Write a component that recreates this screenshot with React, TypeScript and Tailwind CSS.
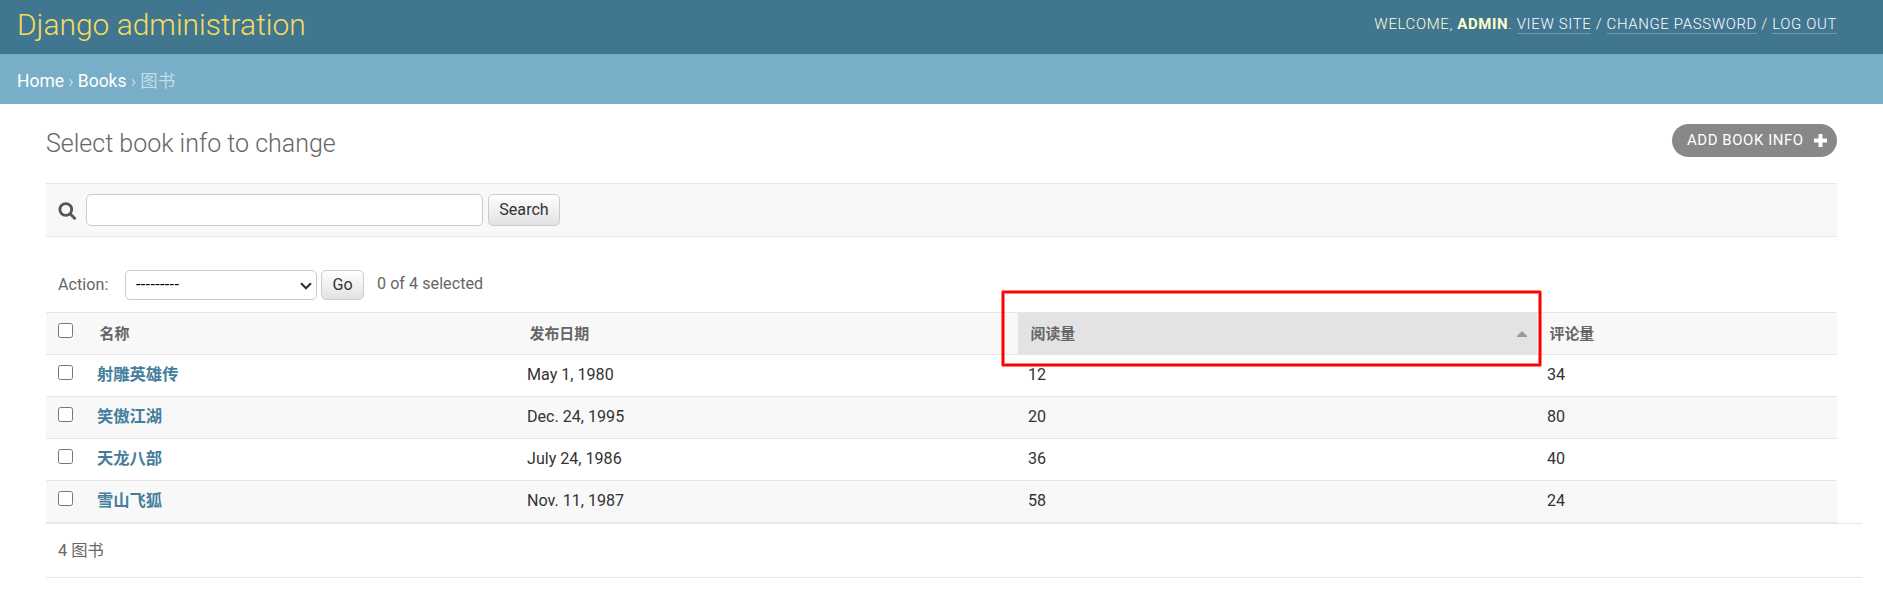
import React from "react";

const books = [
  { name: "射雕英雄传", date: "May 1, 1980", reads: 12, comments: 34 },
  { name: "笑傲江湖", date: "Dec. 24, 1995", reads: 20, comments: 80 },
  { name: "天龙八部", date: "July 24, 1986", reads: 36, comments: 40 },
  { name: "雪山飞狐", date: "Nov. 11, 1987", reads: 58, comments: 24 },
];

const grid = "grid grid-cols-[42px_430px_500px_519px_300px]";
const tool = "border-b border-white/25 text-white";
const button = "rounded-[5px] border border-[#ccc] bg-linear-to-b from-white to-[#e2e2e2] text-[#333]";

function Check() {
  return <input type="checkbox" className="m-0 mt-[10px] ml-3 block size-[15px]" />;
}

function Header() {
  return (
    <header className="flex h-[54px] justify-between bg-[#417690] pr-[46px] pl-[17px] text-[#ffc]">
      <h1 className="mt-[5px] text-[29.95px] leading-10 font-light text-[#f5dd5d]">Django administration</h1>
      <div className="mt-[14px] text-[14.95px] leading-[20px] font-light tracking-[0.65px] whitespace-nowrap uppercase">
        Welcome, <strong className="font-bold">admin</strong>. <a className={tool}>View site</a> /{" "}
        <a className={tool}>Change password</a> / <a className={tool}>Log out</a>
      </div>
    </header>
  );
}

function Results() {
  return (
    <div className="relative w-[1791px]">
      <div className={`${grid} h-[42px] border-t border-[#e6e6e6] bg-[#f8f8f8] text-[14.95px] leading-[43px] font-bold text-[#666]`}>
        <Check />
        <div className="pl-[11.5px]">名称</div>
        <div className="pl-[11.5px]">发布日期</div>
        <div className="flex h-[41px] justify-between bg-[#e3e3e3] pr-[10px] pl-[12.5px]">
          <span>阅读量</span>
          <svg width="10" height="6" viewBox="0 0 10 6" fill="#999" className="mt-[18px]">
            <path d="M0 6V5L5 0l5 5v1z" />
          </svg>
        </div>
        <div className="pl-[12.5px]">评论量</div>
      </div>
      {books.map((b) => (
        <div
          key={b.name}
          className={`${grid} h-[42px] border-t border-[#e6e6e6] text-[16.1px] leading-[40px] text-[#333] even:bg-white odd:bg-[#f8f8f8]`}
        >
          <Check />
          <a className="pl-[9px] text-[16.3px] font-bold text-[#447e9b]">{b.name}</a>
          <div className="pl-[9px]">{b.date}</div>
          <div className="pl-[10px]">{b.reads}</div>
          <div className="pl-[10px]">{b.comments}</div>
        </div>
      ))}
      <div className="h-px bg-[#e6e6e6]" />
      <div className="absolute top-[-22px] left-[955px] h-[77px] w-[541px] rounded-[2px] border-4 border-[#f00]/50">
        <div className="absolute -inset-[3px] rounded-[1px] border-2 border-[#f00]" />
      </div>
    </div>
  );
}

export default function App() {
  return (
    <div className="h-[615px] overflow-hidden bg-white font-['Roboto','Noto_Sans_CJK_SC',sans-serif] text-[16.1px] text-[#666]">
      <Header />
      <nav className="h-[50px] bg-[#79aec8] pl-[17px] text-[17.45px] leading-[54px] text-[#c4dce8]">
        <a className="text-white">Home</a> › <a className="text-white">Books</a> › 图书
      </nav>
      <main className="pl-[46px]">
        <div className="flex h-[79px] w-[1791px] items-start justify-between">
          <h2 className="mt-[22px] text-[25px] leading-[36px] font-light">Select book info to change</h2>
          <a className="mt-5 flex h-[33px] w-[165px] items-center rounded-[17px] bg-[#888] pl-[15px] text-[14.95px] leading-[22px] tracking-[0.575px] text-white">
            <span className="grow pb-[2px]">ADD BOOK INFO</span>
            <svg width="13" height="13" viewBox="0 0 14 14" className="mr-[10px]" fill="#fff">
              <path d="M5.500 0h3a.6.6 0 0 1 .6.6v4.300h4.300a.6.6 0 0 1 .6.6v3a.6.6 0 0 1-.6.6H9.100v4.300a.6.6 0 0 1-.6.6h-3a.6.6 0 0 1-.6-.6V9.100H.6a.6.6 0 0 1-.6-.6v-3a.6.6 0 0 1 .6-.6h4.300V.6a.6.6 0 0 1 .6-.6z" />
            </svg>
          </a>
        </div>
        <div className="flex h-[54px] w-[1791px] items-center border-y border-[#e6e6e6] bg-[#f8f8f8] pl-3">
          <svg width="19" height="18" viewBox="0 0 19 18" fill="none" stroke="#555" className="mt-px mr-[9px] shrink-0">
            <circle cx="7.800" cy="7.500" r="5.900" strokeWidth="2.800" />
            <path d="M12.300 12l4.300 4.200" strokeWidth="3" strokeLinecap="round" />
          </svg>
          <input className="h-8 w-[397px] rounded-[5px] border border-[#ccc] bg-white" />
          <button className={`${button} ml-[5px] h-8 w-[72px]`}>Search</button>
        </div>
        <div className="flex h-[75px] pt-[33px] pl-3">
          <span className="w-[67px] leading-[30px] tracking-[0.05px]">Action:</span>
          <div className="relative h-[30px] w-[192px]">
            <select className="h-[30px] w-[192px] appearance-none rounded-[5px] border border-[#ccc] bg-white pl-[10px] tracking-[0.35px] text-black">
              <option>---------</option>
            </select>
            <svg width="12" height="8" viewBox="0 0 12 8" fill="none" stroke="#333" strokeWidth="2.200" className="pointer-events-none absolute top-[12px] right-[5px]">
              <path d="M1 1.200l5 5 5-5" />
            </svg>
          </div>
          <button className={`${button} ml-1 h-[30px] w-[43px]`}>Go</button>
          <span className="ml-[13px] leading-[28px] tracking-[0.05px]">0 of 4 selected</span>
        </div>
        <Results />
        <div className="h-[55px] w-[1816px] border-y border-[#e6e6e6] pl-3 text-[16.3px] leading-[53px]">4 图书</div>
      </main>
    </div>
  );
}
